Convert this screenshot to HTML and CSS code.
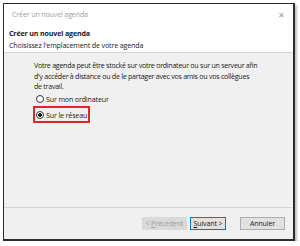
FILE: index.html
```html
<!DOCTYPE html>
<html lang="fr">
<head>
    <meta charset="UTF-8">
    <title>Créer un nouvel agenda</title>
    <link rel="stylesheet" href="styles.css">
</head>
<body>

<div class="dialog">
    <div class="titlebar">
        <span class="title">Créer un nouvel agenda</span>
        <span class="close">&#x2715;</span>
    </div>
    <div class="header">
        <div class="header-title">Créer un nouvel agenda</div>
        <div class="header-sub">Choisissez l'emplacement de votre agenda</div>
    </div>
    <div class="content">
        <p class="intro">Votre agenda peut être stocké sur votre ordinateur ou sur un serveur afin<br>d'y accéder à distance ou de le partager avec vos amis ou vos collègues<br>de travail.</p>
        <div class="option first">
            <span class="radio"></span>
            <span>Sur mon ordinateur</span>
        </div>
        <div class="option marked">
            <span class="radio checked"></span>
            <span>Sur le réseau</span>
        </div>
    </div>
    <div class="footer">
        <button class="btn" disabled>&lt; <u>P</u>récédent</button>
        <button class="btn primary"><u>S</u>uivant &gt;</button>
        <button class="btn cancel">Annuler</button>
    </div>
</div>

</body>
</html>
```

FILE: styles.css
```css
body {
    margin: 0;
    background: #fff;
    font-family: "Open Sans", "Noto Sans", sans-serif;
    font-size: 7.1px;
    letter-spacing: -0.15px;
    color: #1a1a1a;
}
.dialog {
    margin: 3px 0 0 3px;
    width: 292px;
    height: 238px;
    border: 1px solid #2b2b2b;
    border-right-width: 2px;
    border-bottom-width: 2px;
    box-shadow: 2px 2px 2px rgba(0, 0, 0, 0.25);
    background: #f0f0f0;
    display: flex;
    flex-direction: column;
    box-sizing: border-box;
}
.titlebar {
    background: #fff;
    height: 20px;
    display: flex;
    align-items: center;
    justify-content: space-between;
    padding: 0 8px 0 8px;
}
.title {
    color: #a0a0a0;
}
.close {
    color: #9a9a9a;
    font-size: 8px;
}
.header {
    background: #fff;
    padding: 3px 5px 3px 5px;
    border-bottom: 1px solid #d6d6d6;
    height: 22px;
}
.header-title {
    font-weight: bold;
    line-height: 12px;
}
.header-sub {
    line-height: 12px;
}
.content {
    flex: 1;
    padding: 7px 10px 0 30px;
    border-bottom: 1px solid #d6d6d6;
}
.intro {
    margin: 0;
    line-height: 10.7px;
    letter-spacing: -0.27px;
    white-space: nowrap;
}
.option {
    display: flex;
    align-items: center;
    gap: 2px;
    padding-left: 2px;
    white-space: nowrap;
}
.option.first {
    height: 14px;
}
.option.marked {
    box-sizing: border-box;
    width: 57px;
    height: 17px;
    border: 2px solid #e0262c;
    margin-left: -1px;
    padding-left: 1px;
}
.radio {
    width: 8px;
    height: 8px;
    border: 1px solid #333;
    border-radius: 50%;
    background: #fff;
    box-sizing: border-box;
}
.radio.checked {
    background: radial-gradient(circle, #1a1a1a 0 1.7px, #fff 2px);
}
.footer {
    height: 31px;
    display: flex;
    align-items: center;
    justify-content: flex-end;
    padding-right: 8px;
    gap: 3px;
}
.btn {
    font-family: inherit;
    font-size: 7px;
    letter-spacing: -0.1px;
    height: 13px;
    width: 45px;
    padding: 0;
    border: 1px solid #adadad;
    background: #e1e1e1;
    color: #1a1a1a;
    white-space: nowrap;
}
.btn:disabled {
    color: #a0a0a0;
    background: #d9d9d9;
    border-color: #d9d9d9;
}
.primary {
    border: 1px solid #0078d7;
    width: 36px;
}
.cancel {
    margin-left: 11px;
}
```
